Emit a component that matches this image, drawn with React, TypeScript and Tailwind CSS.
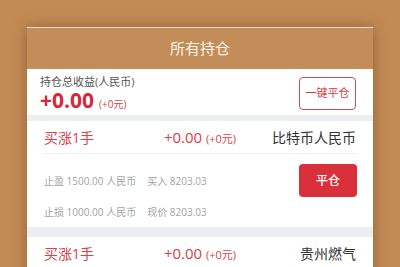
const font = { fontFamily: '"Open Sans", "Noto Sans CJK SC", sans-serif' };

type Position = {
  side: string;
  name: string;
  takeProfit: string;
  stopLoss: string;
  buy: string;
  now: string;
};

const positions: Position[] = [
  { side: "买涨1手", name: "比特币人民币", takeProfit: "1500.00", stopLoss: "1000.00", buy: "8203.03", now: "8203.03" },
  { side: "买涨1手", name: "贵州燃气", takeProfit: "1500.00", stopLoss: "1000.00", buy: "8203.03", now: "8203.03" },
];

function PositionCard({ p }: { p: Position }) {
  return (
    <div className="bg-white px-[17px]">
      {/* Top row */}
      <div className="grid h-[33px] grid-cols-3 items-center border-b border-[#eceef0]">
        <span className="text-[14px] text-[#d8404a]">{p.side}</span>
        <span className="text-center text-[15px] text-[#d8404a]">
          +0.00 <span className="text-[11px]">(+0元)</span>
        </span>
        <span className="text-right text-[14px] text-[#333]">{p.name}</span>
      </div>

      {/* Details */}
      <div className="flex h-[73px] items-start justify-between">
        <div className="flex flex-col gap-[12px] pt-[18px] text-[10px] text-[#a3a3a3]">
          <div className="flex h-[19px] items-center gap-[11px]">
            <span>止盈 {p.takeProfit} 人民币</span>
            <span>买入 {p.buy}</span>
          </div>
          <div className="flex h-[19px] items-center gap-[11px]">
            <span>止损 {p.stopLoss} 人民币</span>
            <span>现价 {p.now}</span>
          </div>
        </div>
        <button className="mt-[10px] -mr-px h-[33px] w-[58px] rounded-[4px] bg-[#d9303b] text-[12px] font-medium text-white">
          平仓
        </button>
      </div>
    </div>
  );
}

export default function App() {
  return (
    <div className="h-[267px] w-[400px] overflow-hidden bg-[#c28b56] px-[27px] pt-[27px]" style={font}>
      <div className="flex flex-col bg-[#eceef1] shadow-[0_0_14px_rgba(90,50,15,0.45)]">
        {/* Header */}
        <div className="flex h-[42px] items-center justify-center border-t border-[#f3dcc3] bg-[#c28d58] text-[15px] text-[#fdf3e8]">
          所有持仓
        </div>

        {/* Summary */}
        <div className="flex h-[46px] items-start justify-between bg-white pl-[13px] pr-[17px]">
          <div className="flex flex-col pt-[6px]">
            <span className="text-[11px] leading-[14px] text-[#555]">持仓总收益(人民币)</span>
            <span className="flex items-baseline gap-[5px] leading-[22px]">
              <span className="text-[21px] font-bold text-[#d7283a]">+0.00</span>
              <span className="text-[10px] text-[#d8404a]">(+0元)</span>
            </span>
          </div>
          <button className="mt-[8px] h-[33px] w-[57px] rounded-[4px] border border-[#cf4b58] text-[11px] text-[#cf3e4b]">
            一键平仓
          </button>
        </div>

        <div className="h-[6px]" />
        <PositionCard p={positions[0]} />
        <div className="h-[10px]" />
        <PositionCard p={positions[1]} />
      </div>
    </div>
  );
}
